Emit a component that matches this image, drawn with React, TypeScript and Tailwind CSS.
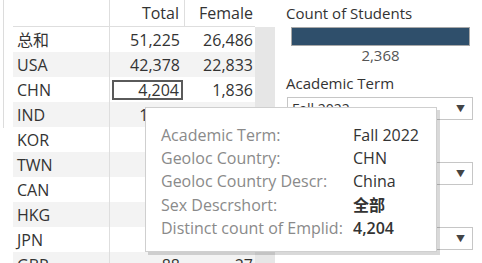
import React from "react";

const rows: { label: string; total: string; female: string }[] = [
  { label: "总和", total: "51,225", female: "26,486" },
  { label: "USA", total: "42,378", female: "22,833" },
  { label: "CHN", total: "4,204", female: "1,836" },
  { label: "IND", total: "1,135", female: "402" },
  { label: "KOR", total: "641", female: "318" },
  { label: "TWN", total: "372", female: "197" },
  { label: "CAN", total: "301", female: "164" },
  { label: "HKG", total: "187", female: "96" },
  { label: "JPN", total: "142", female: "71" },
  { label: "GBR", total: "88", female: "27" },
];

const tip: { k: string; v: string; weight?: string }[] = [
  { k: "Academic Term:", v: "Fall 2022" },
  { k: "Geoloc Country:", v: "CHN" },
  { k: "Geoloc Country Descr:", v: "China" },
  { k: "Sex Descrshort:", v: "全部", weight: "font-bold" },
  { k: "Distinct count of Emplid:", v: "4,204", weight: "font-semibold" },
];

function Dropdown({ value }: { value: string }) {
  return (
    <div className="ml-px flex h-[23px] w-[186px] items-center justify-between border border-[#c6c6c6] bg-white pl-[4px] pr-[7px] text-[14px] text-[#333]">
      <span>{value}</span>
      <span className="text-[9px] text-[#444]">▼</span>
    </div>
  );
}

export default function App() {
  return (
    <div
      className="relative flex h-[263px] w-[482px] overflow-hidden bg-white text-[#333]"
      style={{ fontFamily: '"Open Sans", "Noto Sans CJK SC", sans-serif' }}
    >
      {/* left gutter */}
      <div className="w-[13px] shrink-0">
        <div className="ml-[3px] h-[128px] w-px bg-[#dcdcdc]" />
      </div>

      {/* crosstab */}
      <div className="w-[242px] shrink-0 text-[16px]">
        <div className="flex h-[27px] border-b border-[#dedede]">
          <div className="w-[97px] border-r border-[#dedede]" />
          <div className="flex w-[75px] items-center justify-end border-r border-[#dedede] pr-[5px]">
            Total
          </div>
          <div className="flex w-[70px] items-center justify-end pr-[2px]">Female</div>
        </div>
        {rows.map((r, i) => (
          <div
            key={r.label}
            className={`flex h-[25px] items-center ${i % 2 === 1 ? "bg-[#f3f3f3]" : "bg-white"}`}
          >
            <div className="flex h-full w-[97px] items-center border-r border-[#dedede] pl-[4px]">
              {r.label}
            </div>
            <div className="flex h-full w-[75px] items-center justify-end">
              {r.label === "CHN" ? (
                <div className="mr-[2px] flex h-[20px] w-[71px] items-center justify-end border-2 border-[#5a5a5a] pr-[2px]">
                  {r.total}
                </div>
              ) : (
                <span className="pr-[5px]">{r.total}</span>
              )}
            </div>
            <div className="w-[70px] pr-[2px] text-right">{r.female}</div>
          </div>
        ))}
      </div>

      {/* scroll strip */}
      <div className="w-[20px] shrink-0 pt-[27px]">
        <div className="h-full bg-[#e6e6e6]" />
      </div>

      {/* right panel */}
      <div className="flex flex-1 flex-col pl-[11px]">
        <div className="mt-[3px] text-[15px] leading-[20px]">Count of Students</div>
        <div className="ml-[5px] mt-[4px] w-[179px]">
          <div className="h-[19px] border border-[#a8a8a8] bg-[#2f4f6b]" />
          <div className="text-center text-[15px] leading-[18px] text-[#555]">2,368</div>
        </div>
        <div className="mt-[9px] text-[15px] leading-[20px]">Academic Term</div>
        <div className="mt-[4px]">
          <Dropdown value="Fall 2022" />
        </div>
        <div className="mt-[42px]">
          <Dropdown value="CHN" />
        </div>
        <div className="mt-[42px]">
          <Dropdown value="(All)" />
        </div>
      </div>

      {/* tooltip */}
      <div className="absolute left-[145px] top-[107px] h-[145px] w-[292px] border border-[#cfcfcf] bg-white pl-[15px] pt-[15px] shadow-[3px_3px_0_rgba(0,0,0,0.15)]">
        {tip.map((t) => (
          <div key={t.k} className="flex h-[23.3px] items-center text-[16px]">
            <span className="w-[192px] shrink-0 text-[#8a8a8a]">{t.k}</span>
            <span className={`${t.weight ?? ""} text-[#333]`}>{t.v}</span>
          </div>
        ))}
      </div>
    </div>
  );
}
